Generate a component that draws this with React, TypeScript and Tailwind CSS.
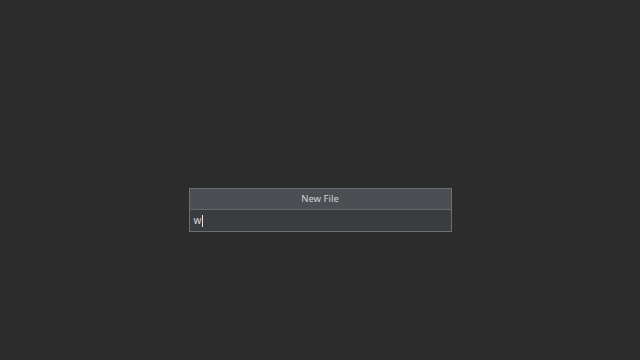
import React from "react";

export default function App() {
  return (
    <div
      className="w-[640px] h-[360px] bg-[#2c2c2c] flex flex-col items-center pt-[188px]"
      style={{ fontFamily: '"Noto Sans", "Open Sans", sans-serif' }}
    >
      {/* New file prompt */}
      <div className="w-[263px] border border-[#6c6f74] bg-[#3a3c40] flex flex-col">
        <div className="h-[21px] bg-[#4b4e53] border-b border-[#62656a] flex items-center justify-center text-[9.5px] text-[#d2d3d5]">
          New File
        </div>
        <div className="h-[21px] flex items-center px-[4px] text-[10px] text-[#d8d8d8]">
          <span>w</span>
          <span className="w-px h-[12px] bg-[#e0e0e0] ml-px" />
        </div>
      </div>
    </div>
  );
}
